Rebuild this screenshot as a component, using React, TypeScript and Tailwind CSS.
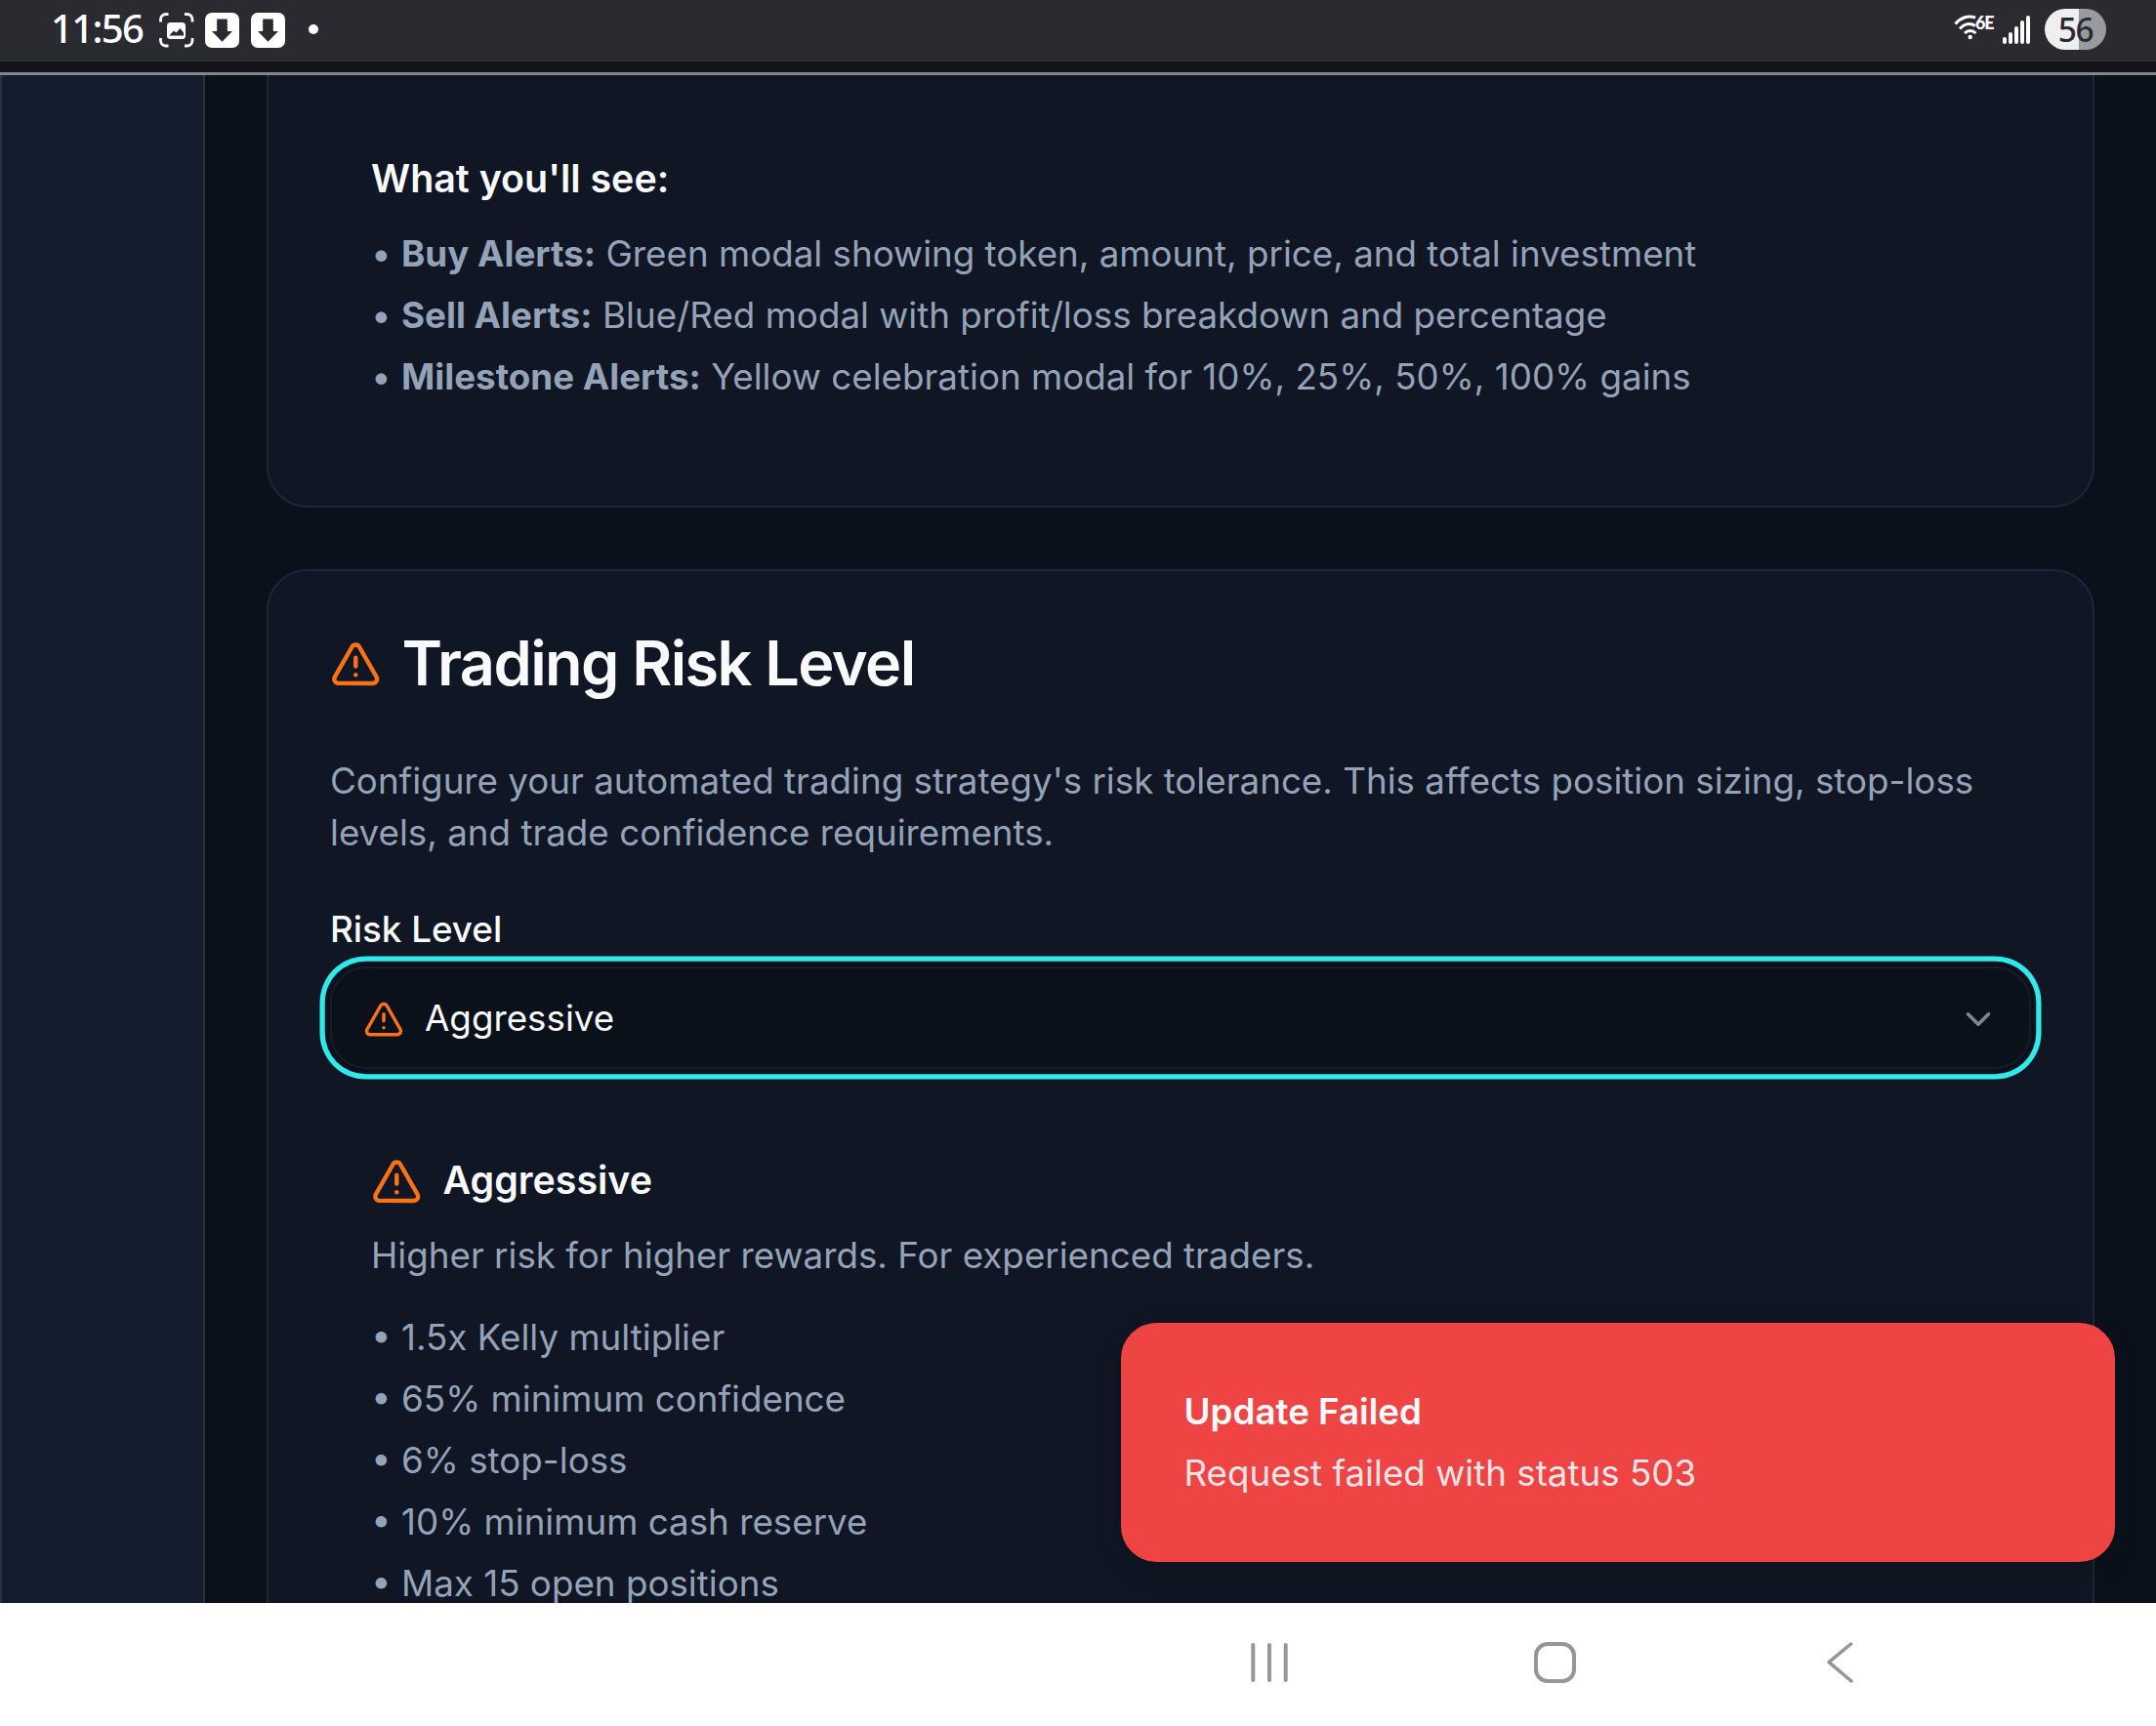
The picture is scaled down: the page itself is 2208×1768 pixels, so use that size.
import React from 'react';

function Warning({ className }: { className: string }) {
  return (
    <svg viewBox="0 0 24 24" fill="none" stroke="#f97316" strokeWidth="2" strokeLinecap="round" strokeLinejoin="round" className={className}>
      <path d="m21.73 18-8-14a2 2 0 0 0-3.48 0l-8 14A2 2 0 0 0 4 21h16a2 2 0 0 0 1.73-3" />
      <path d="M12 9v4" />
      <path d="M12 17h.01" />
    </svg>
  );
}

function DownloadBadge() {
  return (
    <svg viewBox="0 0 35 36" className="h-9 w-[35px]">
      <rect width="35" height="36" rx="7" fill="#fff" />
      <path d="M12 6.5h11V19h5L17.500 29.800 7 19h5z" transform="translate(0 13) scale(1 1) translate(0 -13)" fill="#2a2b30" />
      <path d="M12.500 7v12M22.500 7v12" stroke="#77787c" strokeWidth="1" strokeDasharray="1.500 1.500" />
    </svg>
  );
}

function StatusBar() {
  return (
    <header className="flex h-[63px] shrink-0 items-start justify-between bg-[#2a2b30] pl-[52px] pr-[51px]">
      <div className="flex items-start">
        <span className="mt-px w-[111px] whitespace-nowrap font-['Noto_Sans'] text-[40px] font-medium leading-[56px] tracking-[-1.6px] text-white">11:56</span>
        <svg viewBox="0 0 36 36" className="mt-[13px] h-9 w-9" fill="none">
          <path d="M1.500 9.500V7a5.500 5.500 0 0 1 5.500-5.500h2.500M26 1.500h2.500A5.500 5.500 0 0 1 34 7v2.500M34 26v2.500a5.500 5.500 0 0 1-5.500 5.500H26M9.500 34H7a5.500 5.500 0 0 1-5.500-5.500V26" stroke="#fff" strokeWidth="2.800" />
          <rect x="8" y="10" width="19" height="17" rx="3.500" fill="#fff" />
          <path d="M11 22.500l4-4 2.500 2 4-4.500 3.500 4.500v3H11z" fill="#2a2b30" />
        </svg>
        <div className="ml-[11px] mt-[13px] flex gap-3">
          <DownloadBadge />
          <DownloadBadge />
        </div>
        <span className="ml-6 mt-[25px] size-[10px] rounded-full bg-white" />
      </div>
      <div className="flex items-start">
        <div className="flex items-start">
          <svg viewBox="0 0 24 26" className="mt-[15px] h-[26px] w-6 overflow-visible" fill="none" stroke="#fff" strokeWidth="3">
            <path d="M1.500 9.500C7 3 15 0 22 3.200M6 14.500c4.500-5 10.500-6.500 16-3M11 19c3.500-3.500 8-3.500 11.500 0" />
            <circle cx="16.700" cy="23" r="2.200" fill="#fff" stroke="none" />
          </svg>
          <span className="-ml-[2px] mr-px mt-[11px] w-[19px] whitespace-nowrap font-['Lato'] text-[18px] font-black leading-[24px] tracking-[-1.2px] text-white">6E</span>
        </div>
        <div className="ml-[8px] mt-[16px] flex h-[29px] items-end gap-[2px]">
          <span className="h-[7px] w-1 rounded-full bg-white" />
          <span className="h-[12px] w-1 rounded-full bg-white" />
          <span className="h-[18px] w-1 rounded-full bg-white" />
          <span className="h-[24px] w-1 rounded-full bg-white" />
          <span className="h-[29px] w-1 rounded-full bg-white" />
        </div>
        <div className="ml-[15px] mt-[9px] flex h-[42px] w-[63px] items-center justify-center rounded-full bg-linear-to-r from-[#efeff0] from-[56%] to-[#9a9b9e] to-[56%]">
          <span className="font-['Noto_Sans'] text-[33.5px] font-medium leading-[40px] tracking-[-1.5px] text-[#2a2b30]">56</span>
        </div>
      </div>
    </header>
  );
}

const alerts = [
  ['Buy Alerts:', 'Green modal showing token, amount, price, and total investment'],
  ['Sell Alerts:', 'Blue/Red modal with profit/loss breakdown and percentage'],
  ['Milestone Alerts:', 'Yellow celebration modal for 10%, 25%, 50%, 100% gains'],
];

const rules = ['1.5x Kelly multiplier', '65% minimum confidence', '6% stop-loss', '10% minimum cash reserve', 'Max 15 open positions'];

function AlertsCard() {
  return (
    <section className="h-[443px] shrink-0 rounded-b-[42px] border-2 border-t-0 border-[#1c273a] bg-[#101623] px-[105px] pt-[74px]">
      <h3 className="text-[39.375px] font-semibold leading-[63px] text-[#f8fafc]">What you'll see:</h3>
      <ul className="mt-[20px] flex flex-col gap-[10.5px] text-[36.75px] leading-[52.5px] text-[#94a3b8]">
        {alerts.map(([name, text]) => (
          <li key={name}>• <strong className="font-bold">{name}</strong> {text}</li>
        ))}
      </ul>
    </section>
  );
}

function RiskCard() {
  return (
    <section className="h-[1200px] shrink-0 rounded-t-[42px] border-2 border-[#1c273a] bg-[#101623] px-[63px] pt-[63px]">
      <h2 className="flex items-center gap-[21px] text-[63px] font-semibold leading-[63px] tracking-[-0.025em] text-[#f8fafc]">
        <Warning className="mt-px size-[52.5px]" />
        Trading Risk Level
      </h2>
      <p className="mt-[63px] text-[36.75px] leading-[52.5px] text-[#94a3b8]">
        Configure your automated trading strategy's risk tolerance. This affects position sizing, stop-loss<br />levels, and trade confidence requirements.
      </p>
      <div className="mt-[42px] text-[36.75px] font-medium leading-[61px] text-[#f8fafc]">Risk Level</div>
      <button className="mt-[8px] flex h-[105px] w-full items-center justify-between rounded-[36.75px] border-2 border-[#151c2b] bg-[#0b111b] pl-[32px] pr-[31px] pt-[2px] ring-[5.25px] ring-[#2eeaea] ring-offset-[5.25px] ring-offset-[#0b111b]">
        <span className="flex items-center gap-[21px] text-[36.75px] leading-[52.5px] text-[#f8fafc]">
          <Warning className="size-[42px]" />
          Aggressive
        </span>
        <svg viewBox="0 0 24 24" className="size-[42px]" fill="none" stroke="#84878e" strokeWidth="2" strokeLinecap="round" strokeLinejoin="round">
          <path d="m6 9 6 6 6-6" />
        </svg>
      </button>
      <div className="px-[42px] pt-[84px]">
        <h3 className="flex h-[60px] items-center gap-[21px] text-[39.375px] font-semibold text-[#f8fafc]">
          <Warning className="mt-[2px] size-[52.5px]" />
          Aggressive
        </h3>
        <p className="mt-[21px] text-[36.75px] leading-[52.5px] text-[#94a3b8]">Higher risk for higher rewards. For experienced traders.</p>
        <ul className="mt-[31.5px] flex flex-col gap-[10.5px] text-[36.75px] leading-[52.5px] text-[#94a3b8]">
          {rules.map((rule) => (
            <li key={rule}>• {rule}</li>
          ))}
        </ul>
      </div>
    </section>
  );
}

function Toast() {
  return (
    <div className="absolute bottom-[42px] right-[42px] h-[245px] w-[1018px] rounded-[36.75px] border-2 border-[#ef4444] bg-[#ef4444] py-[63px] pl-[62.5px] text-[36.75px] leading-[52.5px] shadow-[0_10px_30px_rgba(0,0,0,0.15)]">
      <div className="font-semibold text-[#f8fafc]">Update Failed</div>
      <div className="mt-[10.5px] text-[#f8fafc]/90">Request failed with status 503</div>
    </div>
  );
}

function NavBar() {
  return (
    <nav className="flex h-[126px] shrink-0 items-start justify-end bg-white pr-[310px] pt-[40px]">
      <svg viewBox="0 0 38 42" className="h-[42px] w-[38px]" stroke="#969696" strokeWidth="4" strokeLinecap="round">
        <path d="M2.300 3v36M19 3v36M35.700 3v36" />
      </svg>
      <svg viewBox="0 0 43 42" className="ml-[252px] h-[42px] w-[43px]" fill="none" stroke="#969696" strokeWidth="4">
        <rect x="2" y="2" width="39" height="38" rx="12" />
      </svg>
      <svg viewBox="0 0 27 42" className="ml-[257px] h-[42px] w-[27px]" fill="none" stroke="#969696" strokeWidth="3.500" strokeLinecap="round" strokeLinejoin="round">
        <path d="M24.500 2 2 20.700 25 40" />
      </svg>
    </nav>
  );
}

export default function App() {
  return (
    <div className="flex h-[1768px] w-[2208px] flex-col overflow-hidden bg-[#0b111b] font-['Inter',sans-serif]">
      <StatusBar />
      <div className="h-[11px] shrink-0 bg-[#121419]" />
      <div className="h-[3px] shrink-0 bg-[#84868f]" />
      <div className="relative flex h-[1565px] shrink-0 overflow-hidden">
        <aside className="w-[210px] shrink-0 border-x-2 border-[#2a3342] bg-[#141d2e]" />
        <main className="flex flex-1 flex-col gap-[63px] overflow-hidden pl-[63px] pr-[63px]">
          <AlertsCard />
          <RiskCard />
        </main>
        <Toast />
      </div>
      <NavBar />
    </div>
  );
}
